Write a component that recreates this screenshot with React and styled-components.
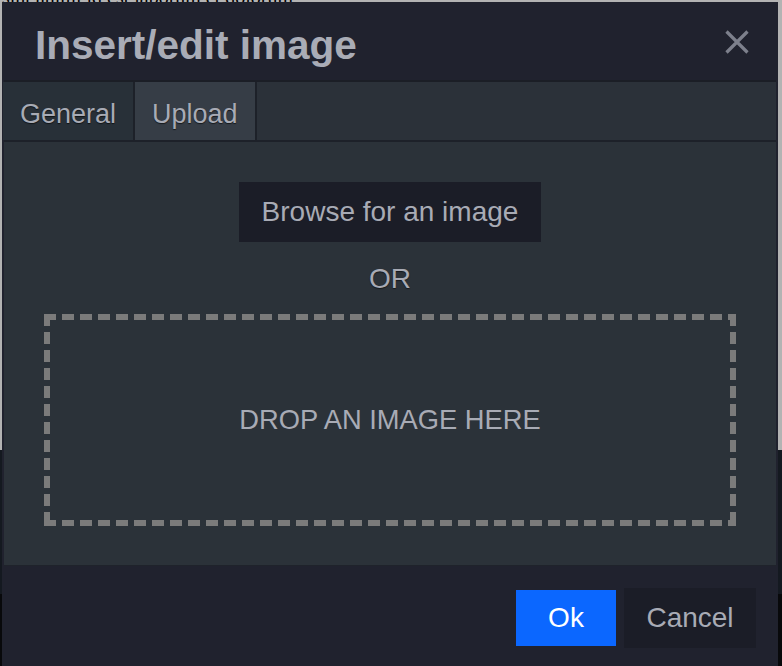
import React from 'react'
import styled, { createGlobalStyle } from 'styled-components'

const Global = createGlobalStyle`
  html, body {
    margin: 0;
    padding: 0;
    background: #b3b3b3;
  }
  body {
    font-family: "Liberation Sans", Arial, Helvetica, sans-serif;
  }
`

const Page = styled.div`
  position: relative;
  width: 782px;
  height: 666px;
  overflow: hidden;
`

const Backdrop = styled.div`
  display: flex;
  flex-direction: column;
  height: 100%;
`

const Editor = styled.div`
  height: 450px;
  background: #b3b3b3;
  color: #000;
  font-family: "Liberation Serif", serif;
  font-size: 20px;
  line-height: 20px;
  p {
    margin: -13px 0 0 2px;
    white-space: nowrap;
  }
`

const Shade = styled.div`
  height: 144px;
  background: #141920;
`

const Floor = styled.div`
  flex: 1;
  background: #08090b;
`

const Dialog = styled.div`
  position: absolute;
  left: 2px;
  top: 2px;
  width: 776px;
  height: 680px;
  box-sizing: border-box;
  padding: 0 2px;
  background: #20222e;
  display: flex;
  flex-direction: column;
  color: #a8abb5;
`

const Header = styled.div`
  height: 80px;
  flex-shrink: 0;
  box-sizing: border-box;
  display: flex;
  align-items: flex-start;
  justify-content: space-between;
  padding: 23px 26px 0 31px;
  border-bottom: 2px solid #1b1e26;
`

const Title = styled.h1`
  margin: 0;
  font-size: 40.5px;
  line-height: 40px;
  font-weight: bold;
  color: #a9acb6;
`

const Close = styled.button`
  border: none;
  background: none;
  padding: 0;
  margin-top: 4px;
  width: 26px;
  height: 26px;
  display: flex;
  align-items: center;
  justify-content: center;
  cursor: pointer;
`

const Tabs = styled.div`
  display: flex;
  height: 60px;
  flex-shrink: 0;
  box-sizing: border-box;
  background: #2b3139;
  border-bottom: 2px solid #1d2129;
`

const Tab = styled.div`
  display: flex;
  align-items: center;
  padding: 6px 17px 0 17px;
  font-size: 27px;
  color: #a8abb5;
  text-shadow: 0 1px 1px rgba(0, 0, 0, 0.6);
  background: ${p => (p.$active ? '#363d46' : '#283038')};
  border-right: 2px solid #1d2129;
  margin-left: ${p => (p.$first ? '-1px' : '0')};
`

const Body = styled.div`
  height: 424px;
  flex-shrink: 0;
  box-sizing: border-box;
  background: #2b3239;
  display: flex;
  flex-direction: column;
  align-items: center;
  padding: 40px 40px 0 40px;
  border-bottom: 1px solid #1f232b;
`

const Browse = styled.button`
  width: 302px;
  height: 60px;
  border: none;
  background: #1b1d27;
  color: #a8abb5;
  font-family: inherit;
  font-size: 28px;
  padding: 0;
  cursor: pointer;
`

const Or = styled.div`
  margin-top: 21px;
  height: 32px;
  line-height: 32px;
  font-size: 28px;
  color: #a8abb5;
  text-shadow: 0 1px 1px rgba(0, 0, 0, 0.5);
`

const dash = '#7b7b7b'

const DropZone = styled.div`
  margin-top: 19px;
  align-self: stretch;
  height: 212px;
  display: flex;
  align-items: center;
  justify-content: center;
  font-size: 27.3px;
  color: #a8abb5;
  background:
    repeating-linear-gradient(90deg, ${dash} 0 12px, transparent 12px 18px) top left / 100% 6px no-repeat,
    repeating-linear-gradient(90deg, ${dash} 0 12px, transparent 12px 18px) bottom left / 100% 6px no-repeat,
    repeating-linear-gradient(180deg, ${dash} 0 12px, transparent 12px 18px) top left / 6px 100% no-repeat,
    repeating-linear-gradient(180deg, ${dash} 0 12px, transparent 12px 18px) top right / 6px 100% no-repeat;
`

const Footer = styled.div`
  flex: 1;
  display: flex;
  justify-content: flex-end;
  align-items: flex-start;
  gap: 8px;
  padding: 22px 20px 0 0;
`

const Button = styled.button`
  border: none;
  padding: 0;
  font-family: inherit;
  font-size: 28px;
  cursor: pointer;
  width: ${p => (p.$primary ? '100px' : '132px')};
  height: ${p => (p.$primary ? '56px' : '60px')};
  margin-top: ${p => (p.$primary ? '2px' : '0')};
  background: ${p => (p.$primary ? '#0b67ff' : '#1b1d27')};
  color: ${p => (p.$primary ? '#ffffff' : '#a8abb5')};
`

export default function App() {
  return (
    <Page>
      <Global />
      <Backdrop>
        <Editor>
          <p>sint animi id est laborum et dolorum</p>
        </Editor>
        <Shade />
        <Floor />
      </Backdrop>
      <Dialog>
        <Header>
          <Title>Insert/edit image</Title>
          <Close aria-label="Close">
            <svg width="24" height="24" viewBox="0 0 24 24">
              <path d="M1.5 1.5 L22.5 22.5 M22.5 1.5 L1.5 22.5" stroke="#7d808c" strokeWidth="3.2" strokeLinecap="butt" />
            </svg>
          </Close>
        </Header>
        <Tabs>
          <Tab $first>General</Tab>
          <Tab $active>Upload</Tab>
        </Tabs>
        <Body>
          <Browse>Browse for an image</Browse>
          <Or>OR</Or>
          <DropZone>DROP AN IMAGE HERE</DropZone>
        </Body>
        <Footer>
          <Button $primary>Ok</Button>
          <Button>Cancel</Button>
        </Footer>
      </Dialog>
    </Page>
  )
}
